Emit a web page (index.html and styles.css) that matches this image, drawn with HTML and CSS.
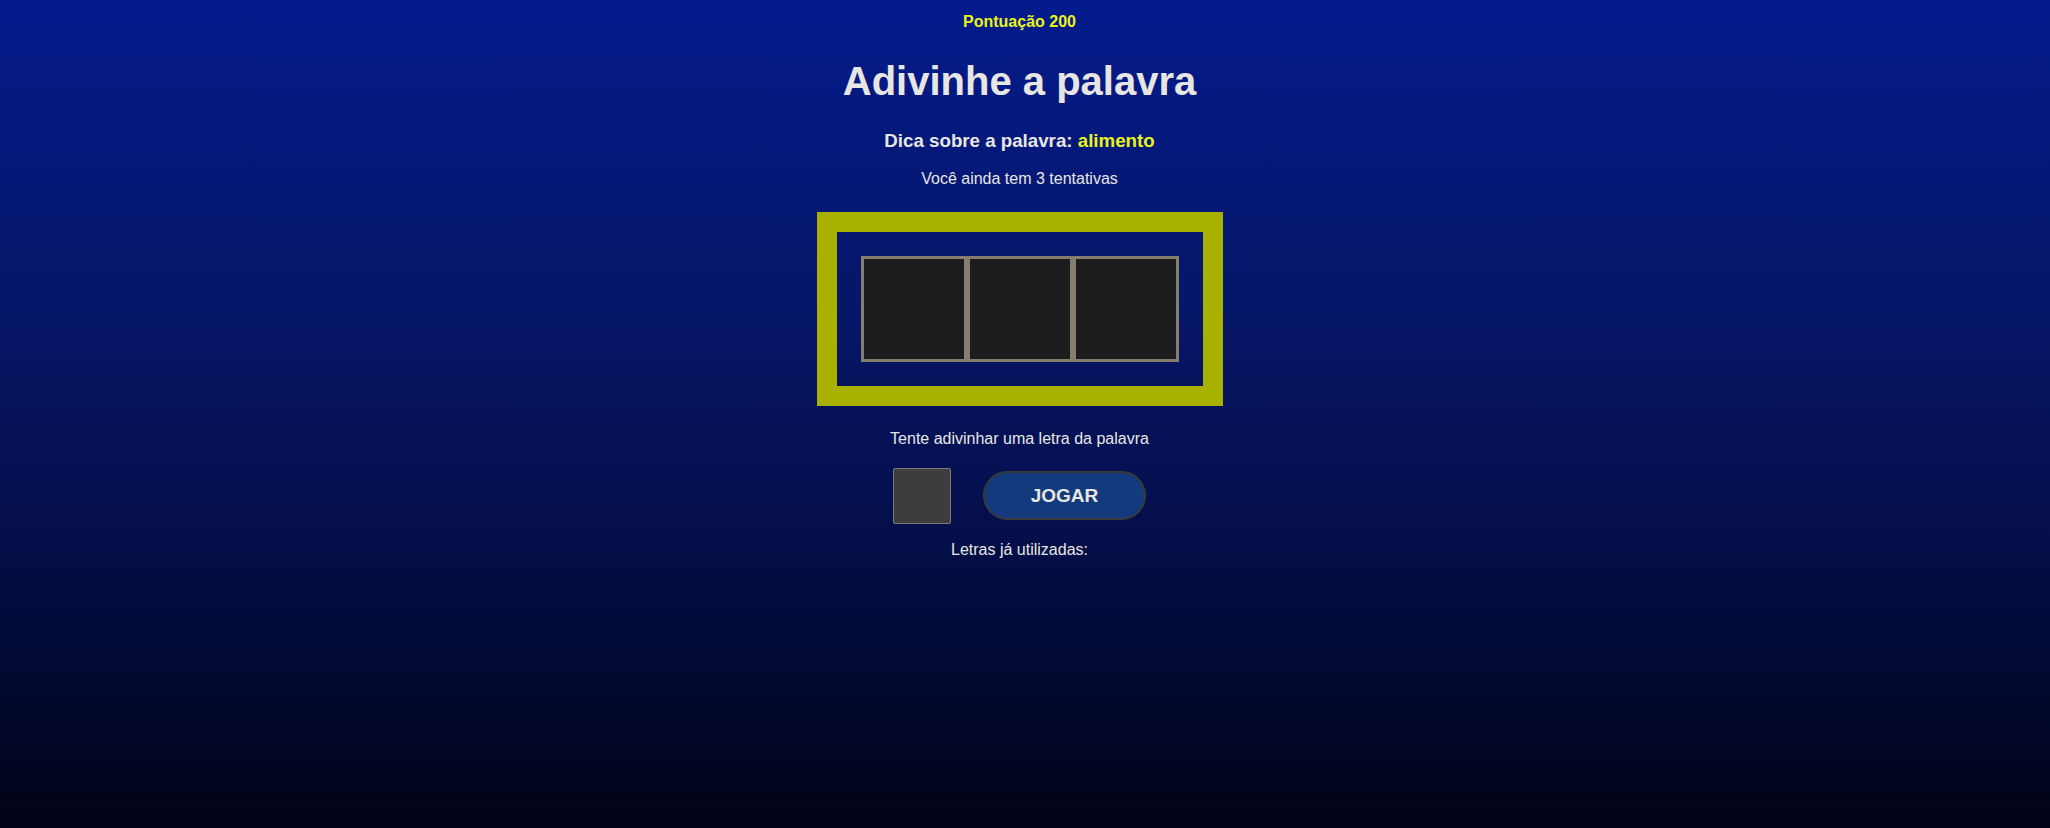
FILE: index.html
```html
<!DOCTYPE html>
<html lang="pt-BR">
<head>
<meta charset="utf-8">
<title>Adivinhe a palavra</title>
<link rel="stylesheet" href="styles.css">
</head>
<body>
<main class="page">
  <p class="score">Pontuação 200</p>
  <h1 class="title">Adivinhe a palavra</h1>
  <h3 class="hint">Dica sobre a palavra: <span class="hint-word">alimento</span></h3>
  <p class="tries">Você ainda tem 3 tentativas</p>
  <div class="board">
    <div class="tiles">
      <div class="tile"></div>
      <div class="tile"></div>
      <div class="tile"></div>
    </div>
  </div>
  <p class="prompt">Tente adivinhar uma letra da palavra</p>
  <div class="play-row">
    <input class="letter-input" type="text" maxlength="1">
    <button class="play-btn" type="button">JOGAR</button>
  </div>
  <p class="used">Letras já utilizadas:</p>
</main>
</body>
</html>
```
FILE: styles.css
```css
html, body {
  margin: 0;
  height: 100%;
}
body {
  background: linear-gradient(to bottom, #041b8c 0%, #06176c 33%, #040e48 66%, #000316 100%);
  font-family: "Liberation Sans", Arial, sans-serif;
  color: #e8e6e3;
  padding-right: 11px;
  box-sizing: border-box;
}
.page {
  display: flex;
  flex-direction: column;
  align-items: center;
  text-align: center;
}
.page > * {
  line-height: normal;
}
.score {
  margin: 13px 0 0;
  font-size: 16px;
  font-weight: bold;
  color: #eaf21c;
}
.title {
  margin: 28px 0 0;
  font-size: 40px;
  font-weight: bold;
}
.hint {
  margin: 26px 0 0;
  font-size: 18.72px;
  font-weight: bold;
}
.hint-word {
  color: #eaf21c;
}
.tries {
  margin: 18px 0 0;
  font-size: 16px;
}
.board {
  margin-top: 24px;
  border: 20px solid #a8b000;
  padding: 24px;
}
.tiles {
  display: flex;
}
.tile {
  width: 100px;
  height: 100px;
  border: 3px solid #877d6f;
  background: #1b1c1e;
}
.prompt {
  margin: 23.5px 0 0;
  font-size: 16px;
}
.play-row {
  margin-top: 20px;
  display: flex;
  align-items: center;
  gap: 32px;
}
.letter-input {
  box-sizing: border-box;
  width: 58px;
  height: 56px;
  margin: 0;
  background: #3d3d3d;
  border: 1px solid #7a7a7a;
  border-radius: 2px;
  color: #e8e6e3;
  font-family: inherit;
  font-size: 24px;
  text-align: center;
}
.play-btn {
  box-sizing: border-box;
  width: 163px;
  height: 49px;
  margin: 0;
  background: #133a7c;
  border: 2px solid #3a3a3a;
  border-radius: 25px;
  color: #e8e6e3;
  font-family: inherit;
  font-size: 19px;
  font-weight: bold;
}
.used {
  margin: 17px 0 0;
  font-size: 16px;
}
```
